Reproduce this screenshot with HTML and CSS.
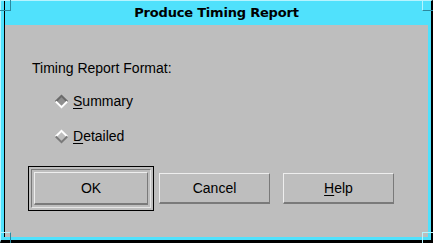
FILE: index.html
```html
<!DOCTYPE html>
<html lang="en">
  <head>
    <meta charset="UTF-8" />
    <title>Produce Timing Report</title>
    <link rel="stylesheet" href="styles.css">
  </head>
  <body>
    <div class="window">
      <div class="inner">
        <div class="title-bar">Produce Timing Report</div>
        <div class="content">
          <div class="label">Timing Report Format:</div>

          <div class="radio checked">
            <svg class="diamond" width="15" height="15" viewBox="0 0 15 15">
              <polygon points="7.5,1 14,7.5 7.5,14 1,7.5" fill="#8e8e8e" />
              <polyline points="1.8,7.5 7.5,1.8 13.2,7.5" fill="none" stroke="#6a6a6a" stroke-width="2" />
              <polyline points="1.8,7.5 7.5,13.2 13.2,7.5" fill="none" stroke="#ffffff" stroke-width="2" />
            </svg>
            <span><u>S</u>ummary</span>
          </div>

          <div class="radio">
            <svg class="diamond" width="15" height="15" viewBox="0 0 15 15">
              <polyline points="1.8,7.5 7.5,1.8 13.2,7.5" fill="none" stroke="#ffffff" stroke-width="2" />
              <polyline points="1.8,7.5 7.5,13.2 13.2,7.5" fill="none" stroke="#7a7a7a" stroke-width="2" />
            </svg>
            <span><u>D</u>etailed</span>
          </div>

          <div class="buttons">
            <div class="default-ring">
              <div class="default-well">
                <button class="btn ok">OK</button>
              </div>
            </div>
            <button class="btn cancel">Cancel</button>
            <button class="btn help"><u>H</u>elp</button>
          </div>
        </div>
      </div>
      <!-- resize corners -->
      <span class="corner tl"></span>
      <span class="corner tr"></span>
      <span class="corner bl"></span>
      <span class="corner br"></span>
    </div>
  </body>
</html>
```

FILE: styles.css
```css
* {
  margin: 0;
  padding: 0;
  box-sizing: border-box;
}

body {
  background: #000;
  font-family: "Liberation Sans", Arial, sans-serif;
  font-size: 14px;
  color: #000;
}

.window {
  position: relative;
  width: 433px;
  height: 243px;
  background: #50e1fc;
  border-left: 1px solid #b6f4ff;
  border-top: 1px solid #b6f4ff;
  border-right: 2px solid #000;
  border-bottom: 3px solid #000;
  padding: 0 3px 3px 3px;
}

.inner {
  height: 100%;
  border-left: 1px solid #000;
  display: flex;
  flex-direction: column;
}

.title-bar {
  height: 24px;
  display: flex;
  align-items: center;
  justify-content: center;
  font-family: "DejaVu Sans", sans-serif;
  font-weight: bold;
  font-size: 13px;
  letter-spacing: -0.2px;
  padding-bottom: 2px;
}

.content {
  flex: 1;
  background: #bebebe;
  padding: 35px 0 0 27px;
}

.label {
  line-height: 16px;
}

.radio {
  display: flex;
  align-items: center;
  gap: 4px;
  margin-left: 22px;
  height: 20px;
  margin-top: 15px;
}

.radio + .radio {
  margin-top: 15px;
}

.diamond {
  flex: none;
}

u {
  text-decoration: underline;
  text-underline-offset: 2px;
}

.buttons {
  display: flex;
  align-items: center;
  margin-left: -4px;
  margin-top: 20px;
}

.default-ring {
  border: 1px solid #000;
  padding: 2px;
}

.default-well {
  border: 1px solid;
  border-color: #7a7a7a #e6e6e6 #e6e6e6 #7a7a7a;
  padding: 2px;
}

.btn {
  display: flex;
  align-items: center;
  justify-content: center;
  width: 111px;
  height: 31px;
  background: #bebebe;
  font-family: "Liberation Sans", Arial, sans-serif;
  font-size: 14px;
  color: #000;
  border: 1px solid;
  border-color: #eeeeee #7a7a7a #7a7a7a #eeeeee;
  border-bottom-width: 2px;
}

.btn.ok {
  width: 114px;
  height: 33px;
}

.cancel {
  margin-left: 5px;
}

.help {
  margin-left: 13px;
}

.corner {
  position: absolute;
  width: 11px;
  height: 11px;
}

.corner.tl {
  left: -1px;
  top: -1px;
  border-right: 1px solid #2a8aa0;
  border-bottom: 1px solid #2a8aa0;
}

.corner.tr {
  right: -2px;
  top: -1px;
  border-left: 1px solid #b6f4ff;
  border-bottom: 1px solid #2a8aa0;
}

.corner.bl {
  left: -1px;
  bottom: -3px;
  border-right: 1px solid #2a8aa0;
  border-top: 1px solid #b6f4ff;
}

.corner.br {
  right: -2px;
  bottom: -3px;
  border-left: 1px solid #b6f4ff;
  border-top: 1px solid #b6f4ff;
}
```
